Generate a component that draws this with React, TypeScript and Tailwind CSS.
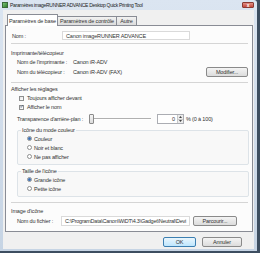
import React from "react";

const font = { fontFamily: '"Liberation Sans", Arial, sans-serif' };

const Check = ({ checked }: { checked?: boolean }) => (
  <div className="w-[5px] h-[5px] border border-[#8e8f8f] bg-gradient-to-br from-[#e6e6e6] to-white flex items-center justify-center shrink-0">
    {checked && (
      <svg width="5" height="5" viewBox="0 0 5 5" className="-mt-[1px]">
        <path d="M0.5 2.5 L2 4 L4.8 0.3" stroke="#1e3a66" strokeWidth="0.9" fill="none" />
      </svg>
    )}
  </div>
);

const Radio = ({ checked }: { checked?: boolean }) => (
  <div className="w-[5px] h-[5px] rounded-full border border-[#8e8f8f] bg-white flex items-center justify-center shrink-0">
    {checked && <div className="w-[3px] h-[3px] rounded-full bg-[#3a6fb5]" />}
  </div>
);

const Button = ({ children, w, primary }: { children: React.ReactNode; w: string; primary?: boolean }) => (
  <div
    className={`${w} h-[10px] rounded-[2px] border flex items-center justify-center ${
      primary
        ? "border-[#3c7fb1] bg-gradient-to-b from-[#eaf6fd] to-[#bee6fd]"
        : "border-[#8a8a8a] bg-gradient-to-b from-[#f4f4f4] to-[#dcdcdc]"
    }`}
  >
    {children}
  </div>
);

const RadioRow = ({ label, checked }: { label: string; checked?: boolean }) => (
  <div className="h-[9px] flex items-center gap-[2px] pl-[9px]">
    <Radio checked={checked} />
    <span>{label}</span>
  </div>
);

export default function App() {
  return (
    <div
      className="w-[260px] h-[253px] bg-[#3d4e60] overflow-hidden text-[5.5px] leading-[8px] tracking-[-0.15px] text-[#333] whitespace-nowrap"
      style={font}
    >
      <div className="w-[257px] h-[251px] bg-gradient-to-b from-[#dbe5f1] to-[#c6d4e4] rounded-tr-[3px] flex flex-col">
        {/* title bar */}
        <div className="h-[10px] flex items-center pl-[2px] pr-[3px] shrink-0">
          <div className="w-[6px] h-[6px] bg-gradient-to-br from-[#7cc576] to-[#2d7d2a] border border-[#3a6a3a] mr-[2px]" />
          <span className="text-[#222] text-[5px] tracking-[-0.3px]">
            Paramètres imageRUNNER ADVANCE Desktop Quick Printing Tool
          </span>
          <div className="ml-auto w-[12px] h-[6px] rounded-[1px] bg-gradient-to-b from-[#e08f85] to-[#c4463a] border border-[#8b3a33] flex items-center justify-center">
            <span className="text-white text-[5px] leading-[5px] font-bold">x</span>
          </div>
        </div>
        {/* client */}
        <div className="flex-1 mx-[3px] mb-[2px] bg-[#f0f0f0] flex flex-col pl-[2px] pr-[1px]">
          {/* tabs */}
          <div className="h-[15px] flex items-end pl-[2px] shrink-0">
            <div className="h-[12px] w-[51px] bg-white border border-b-0 border-[#898c95] flex items-center justify-center relative z-10 -mb-[1px] rounded-t-[1px]">
              Paramètres de base
            </div>
            <div className="h-[9px] w-[59px] bg-gradient-to-b from-[#f2f2f2] to-[#dcdcdc] border border-b-0 border-l-0 border-[#898c95] flex items-center justify-center">
              Paramètres de contrôle
            </div>
            <div className="h-[9px] w-[20px] bg-gradient-to-b from-[#f2f2f2] to-[#dcdcdc] border border-b-0 border-l-0 border-[#898c95] flex items-center justify-center">
              Autre
            </div>
          </div>
          {/* panel */}
          <div className="w-[248px] h-[207px] bg-[#fcfcfc] border border-[#898c95] pl-[5px] pr-[4px] flex flex-col shrink-0">
            <div className="mt-[5px] h-[9px] flex items-center">
              <span className="w-[51px] pl-[1px]">Nom :</span>
              <div className="w-[128px] h-[9px] bg-white border border-[#dadada] flex items-center pl-[3px]">
                Canon imageRUNNER ADVANCE
              </div>
            </div>
            <div className="mt-[3px] h-px bg-[#d5d5d5]" />
            <div className="mt-[5px] h-[8px] flex items-center">Imprimante/télécopieur</div>
            <div className="mt-[1px] h-[8px] flex items-center pl-[6px]">
              <span className="w-[56px]">Nom de l'imprimante :</span>
              <span>Canon iR-ADV</span>
            </div>
            <div className="mt-[1px] h-[10px] flex items-center pl-[6px]">
              <span className="w-[56px]">Nom du télécopieur :</span>
              <span>Canon iR-ADV (FAX)</span>
              <div className="ml-auto">
                <Button w="w-[42px]">Modifier...</Button>
              </div>
            </div>
            <div className="mt-[5px] h-px bg-[#d5d5d5]" />
            <div className="mt-[2px] h-[8px] flex items-center">Afficher les réglages</div>
            <div className="mt-[1px] h-[8px] flex items-center gap-[3px] pl-[8px]">
              <Check />
              <span>Toujours afficher devant</span>
            </div>
            <div className="mt-[1px] h-[8px] flex items-center gap-[3px] pl-[8px]">
              <Check checked />
              <span>Afficher le nom</span>
            </div>
            <div className="mt-[3px] h-[10px] flex items-center pl-[6px]">
              <span className="w-[72px]">Transparence d'arrière-plan :</span>
              <div className="w-[62px] h-[10px] flex items-center">
                <div className="w-[5px] h-[10px] border border-[#8a8a8a] bg-gradient-to-b from-[#f4f4f4] to-[#dcdcdc] rounded-[1px]" />
                <div className="flex-1 h-[2px] border-t border-[#b0b0b0] border-b border-b-white" />
              </div>
              <div className="ml-[6px] w-[27px] h-[10px] bg-white border border-[#abadb3] flex items-center justify-end">
                <span className="pr-[2px]">0</span>
                <div className="w-[6px] h-full flex flex-col border-l border-[#c8c8c8]">
                  <div className="flex-1 bg-[#ececec] border-b border-[#c8c8c8] flex items-center justify-center">
                    <svg width="3" height="2" viewBox="0 0 3 2"><path d="M0 2 L1.5 0 L3 2Z" fill="#444" /></svg>
                  </div>
                  <div className="flex-1 bg-[#ececec] flex items-center justify-center">
                    <svg width="3" height="2" viewBox="0 0 3 2"><path d="M0 0 L1.5 2 L3 0Z" fill="#444" /></svg>
                  </div>
                </div>
              </div>
              <span className="ml-[2px]">% (0 à 100)</span>
            </div>
            <fieldset className="mt-[2px] ml-[6px] w-[232px] border border-[#dde3e8] rounded-[2px] bg-[#f8f8f8] pb-[3px]">
              <legend className="ml-[3px] px-[1px] leading-[8px]">Icône du mode couleur</legend>
              <RadioRow label="Couleur" checked />
              <RadioRow label="Noir et blanc" />
              <RadioRow label="Ne pas afficher" />
            </fieldset>
            <fieldset className="mt-[2px] ml-[6px] w-[232px] border border-[#dde3e8] rounded-[2px] bg-[#f8f8f8] pb-[3px]">
              <legend className="ml-[3px] px-[1px] leading-[8px]">Taille de l'icône</legend>
              <RadioRow label="Grande icône" checked />
              <RadioRow label="Petite icône" />
            </fieldset>
            <div className="mt-[5px] h-px bg-[#d5d5d5]" />
            <div className="mt-[4px] h-[8px] flex items-center">Image d'icône</div>
            <div className="mt-[1px] h-[10px] flex items-center pl-[6px]">
              <span className="w-[44px]">Nom du fichier :</span>
              <div className="w-[129px] h-[10px] bg-white border border-[#dadada] flex items-center pl-[3px] overflow-hidden">
                <span className="tracking-[-0.25px]">C:\ProgramData\Canon\WiDT\4.3\Gadget\Neutral\Devi</span>
              </div>
              <div className="ml-[3px]">
                <Button w="w-[44px]">Parcourir...</Button>
              </div>
            </div>
          </div>
          {/* bottom buttons */}
          <div className="mt-[5px] flex justify-end gap-[6px] pr-[11px]">
            <Button w="w-[33px]" primary>OK</Button>
            <Button w="w-[40px]">Annuler</Button>
          </div>
        </div>
      </div>
    </div>
  );
}
